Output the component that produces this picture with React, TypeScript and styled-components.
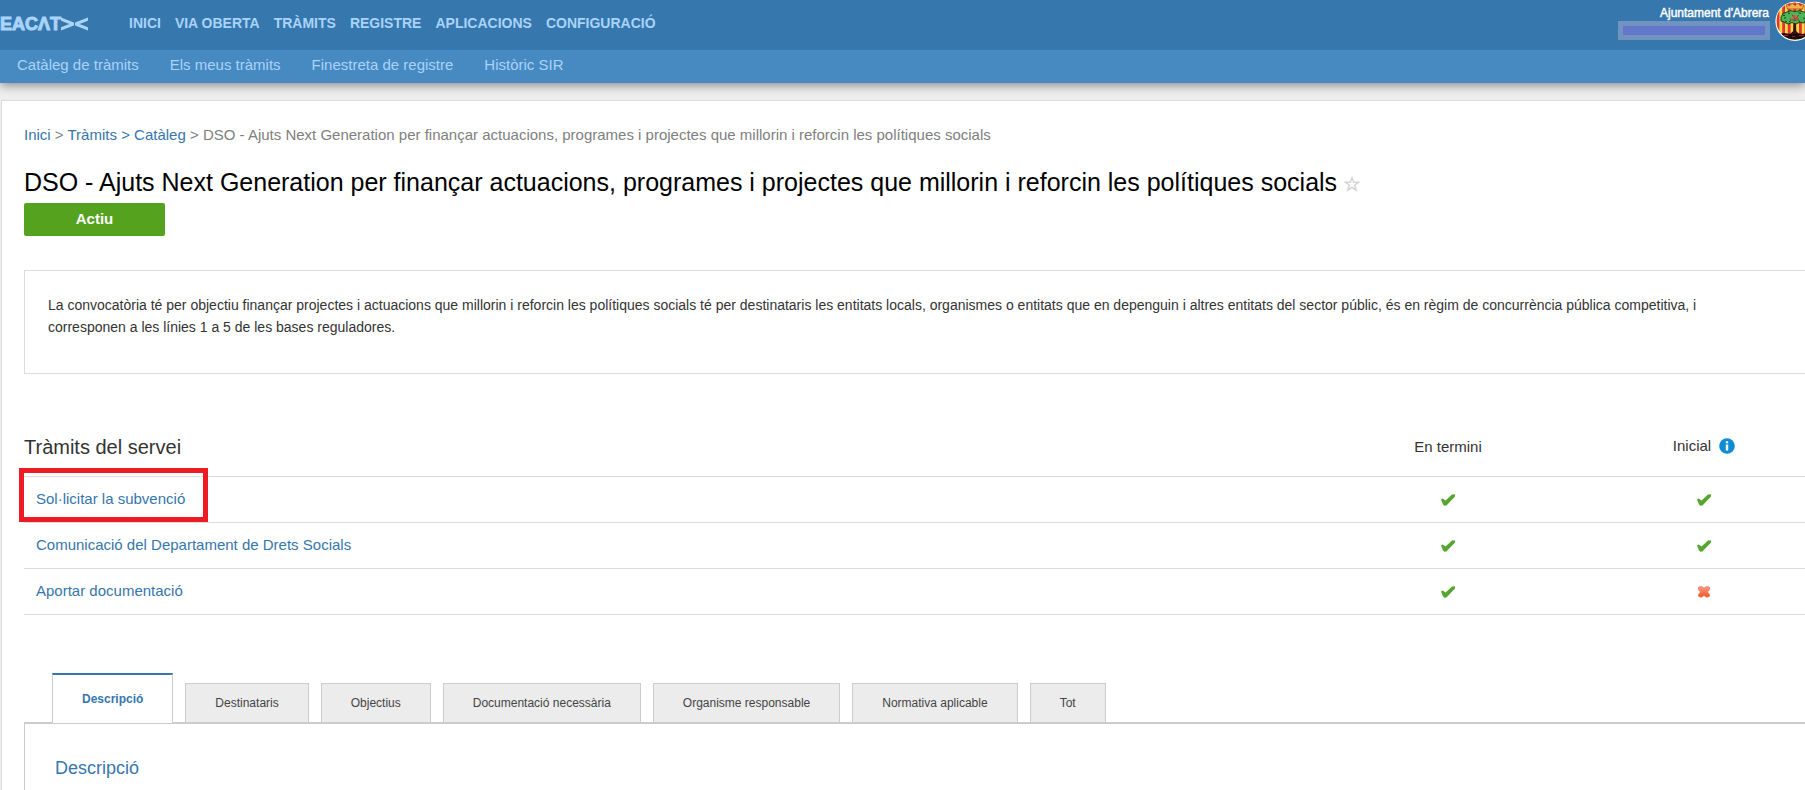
import React from "react";
import styled, { createGlobalStyle } from "styled-components";

const GlobalStyle = createGlobalStyle`
  * { box-sizing: border-box; }
  body {
    margin: 0;
    background: #eeeeee;
    color: #333333;
    font-family: "Liberation Sans", Arial, sans-serif;
    font-size: 15px;
    line-height: 22px;
    overflow-x: hidden;
  }
  h1, h2, h3, p, ul { margin: 0; padding: 0; font-weight: normal; }
  a { text-decoration: none; color: #3676ad; }
`;

const Header = styled.header`
  position: relative;
  box-shadow: 0 2px 10px rgba(0, 0, 0, 0.45);
`;

const TopBar = styled.div`
  display: flex;
  align-items: flex-start;
  height: 50px;
  background: #3677ae;
  overflow: hidden;
`;

const Logo = styled.a`
  display: flex;
  align-items: center;
  width: 113px;
  height: 48px;
  color: #a9d3f9;
  font-size: 18px;
  font-weight: bold;
  line-height: 20px;
  -webkit-text-stroke: 1px #a9d3f9;
`;

const MainNav = styled.nav`
  display: flex;
  flex: 1;
  gap: 14px;
  padding-left: 16px;
`;

const MainLink = styled.a`
  color: #a9d3f9;
  font-size: 14px;
  font-weight: bold;
  line-height: 46px;
`;

const Account = styled.div`
  display: flex;
  flex-direction: column;
  align-items: flex-end;
  padding-top: 6px;
`;

const AccountName = styled.span`
  padding-right: 1px;
  color: #ffffff;
  font-size: 12px;
  line-height: 15px;
  -webkit-text-stroke: 0.4px #ffffff;
`;

const UserMask = styled.div`
  width: 152px;
  height: 19px;
  border: 5px solid #7193c0;
  background: #6277c9;
`;

const CrestSvg = styled.svg`
  flex: none;
  width: 40px;
  height: 40px;
  margin: 1px -10px 0 5px;
`;

const SubNav = styled.nav`
  display: flex;
  gap: 31px;
  height: 33px;
  padding-left: 17px;
  background: #478ac2;
`;

const SubLink = styled.a`
  color: #a9d3f9;
  line-height: 30px;
`;

const Page = styled.main`
  margin: 17px 0 0 1px;
  padding: 23px 0 0 22px;
  border: 1px solid #dbdbe0;
  border-right: 0;
  border-bottom: 0;
  background: #ffffff;
`;

const Breadcrumb = styled.nav`
  color: #808080;
`;

const TitleRow = styled.div`
  display: flex;
  align-items: center;
  gap: 7px;
  padding-top: 20px;
`;

const Title = styled.h1`
  color: #000000;
  font-size: 25px;
  line-height: 32px;
`;

const StarButton = styled.button`
  display: flex;
  padding: 4px 0 0;
  border: 0;
  background: none;
`;

const Status = styled.div`
  width: 141px;
  height: 33px;
  margin-top: 5px;
  border-radius: 2px;
  background: #54a21d;
  color: #ffffff;
  font-weight: bold;
  line-height: 31px;
  text-align: center;
`;

const Summary = styled.section`
  margin-top: 34px;
  padding: 23px 40px 35px 23px;
  border: 1px solid #dcdcdc;
  border-right: 0;
  font-size: 14px;
`;

const ServiceTable = styled.table`
  width: 100%;
  margin-top: 43px;
  border-collapse: collapse;
  table-layout: fixed;
`;

const HeadCell = styled.th<{ $width?: string; $title?: boolean }>`
  width: ${(p) => p.$width || "auto"};
  height: 59px;
  padding: 2px 0 0;
  font-size: ${(p) => (p.$title ? "20px" : "15px")};
  font-weight: normal;
  text-align: ${(p) => (p.$title ? "left" : "center")};
`;

const HeadLabel = styled.span`
  display: inline-flex;
  align-items: center;
  gap: 8px;
  padding-bottom: 2px;
`;

const Cell = styled.td<{ $mark?: boolean }>`
  height: 46px;
  padding: ${(p) => (p.$mark ? "2px 0 0" : "0 12px")};
  border-top: 1px solid #dcdcdc;
  border-bottom: 1px solid #dcdcdc;
  text-align: ${(p) => (p.$mark ? "center" : "left")};
  line-height: ${(p) => (p.$mark ? "0" : "22px")};
`;

const ServiceLink = styled.a`
  position: relative;
`;

const Highlight = styled.span`
  position: absolute;
  top: -22px;
  left: -17px;
  width: 189px;
  height: 54px;
  border: 5px solid #ed1c24;
  pointer-events: none;
`;

const TabList = styled.div`
  display: flex;
  align-items: flex-end;
  gap: 12px;
  margin-top: 58px;
  padding-left: 28px;
`;

const Tab = styled.button<{ $active?: boolean }>`
  position: relative;
  height: ${(p) => (p.$active ? "50px" : "39px")};
  margin-bottom: ${(p) => (p.$active ? "-1px" : "0")};
  padding: 0 29px;
  border: 1px solid #cccccc;
  border-bottom: 0;
  border-top: ${(p) => (p.$active ? "2px solid #3676ad" : "1px solid #cccccc")};
  background: ${(p) => (p.$active ? "#ffffff" : "#ececec")};
  color: ${(p) => (p.$active ? "#3676ad" : "#444444")};
  font-family: inherit;
  font-size: 12px;
  font-weight: ${(p) => (p.$active ? "bold" : "normal")};
`;

const TabPanel = styled.section`
  padding: 32px 30px 10px;
  border-top: 2px solid #cccccc;
  border-left: 1px solid #cccccc;
`;

const PanelTitle = styled.h3`
  color: #3676ad;
  font-size: 18px;
  line-height: 24px;
`;

const Check = () => (
  <svg width="16" height="14" viewBox="0 0 16 14" role="img" aria-label="Sí">
    <path d="M1 6.4 2.6 5.4 5.6 7.6 12 1.6 15 1.2V3.4L6.4 12.4 4.6 12.8 3 11.4Z" fill="#56a52e" />
  </svg>
);

const Cross = () => (
  <svg width="14" height="14" viewBox="0 0 14 14" role="img" aria-label="No">
    <defs>
      <linearGradient id="crossFill" x1="0" y1="0" x2="0" y2="1">
        <stop offset="0" stopColor="#ff9a7c" />
        <stop offset="1" stopColor="#f0582f" />
      </linearGradient>
    </defs>
    <path
      d="M1.5 2.5 2.5 1.8H5L7 3.3 9 1.8H11.5L12.5 2.5V4.6L10.4 7 12.5 9.4V11L11.5 12H9L7 10.4 5 12H2.5L1.5 11V9.4L3.6 7 1.5 4.6Z"
      fill="url(#crossFill)"
      stroke="#e9714f"
      strokeWidth="0.8"
    />
  </svg>
);

const InfoIcon = () => (
  <svg width="16" height="16" viewBox="0 0 16 16" role="img" aria-label="Informació">
    <circle cx="8" cy="8" r="7.8" fill="#108dd2" />
    <path d="M6.8 6.4H9.2V12.6H6.8ZM6.8 3.2H9.2V5.2H6.8Z" fill="#ffffff" />
  </svg>
);

const Crest = () => (
  <CrestSvg viewBox="0 0 40 40" role="img" aria-label="Escut d'Abrera">
    <defs>
      <clipPath id="crestClip"><circle cx="20" cy="20" r="18.6" /></clipPath>
    </defs>
    <circle cx="20" cy="20.4" r="19.6" fill="#ffffff" />
    <g clipPath="url(#crestClip)">
      <rect width="40" height="40" fill="#f8d941" />
      <path d="M3 0V40M8.6 0V40M14.2 0V40M19.8 0V40M25.4 0V40M31 0V40M36.6 0V40" stroke="#e23138" strokeWidth="2.8" />
      <path d="M0 33 9 32 15 33 20 31.5 27 33 34 32 40 33V40H0Z" fill="#1d0b0c" />
      <path d="M18.6 21H20.8L21.2 30 24 33H15L18.2 30Z" fill="#35140f" />
      <path d="M11 2.5 14.5 5 17 2 20 4.5 23 2 25.5 5 29 2.5 27.6 8H12.4Z" fill="#f0b448" stroke="#b8402c" strokeWidth="0.8" />
      <path d="M6 16 8 12.5 12 11 16 9.6 20 10.6 24 9.6 29 11 33 13 34.5 17 32.5 21 28 22 25 21 21 23 17 21.5 13 23 9 21 6 20Z" fill="#4fb457" stroke="#0f3317" strokeWidth="0.9" />
      <path d="M8 14.4H10M13 11.8 15 12.6M23.4 11.8 26 12.4M30 13.6 32 15M10 20 12 20.8M29 20.6 31 19.6M14 21 16 19.6M23 19.6 25 20.4M9 17.2 11 16.6M28 17 30 17.6" stroke="#14471d" strokeWidth="1" />
      <path d="M17 13.6 20 18.4 23.6 14M15 18 20 19.6 24 17.6" fill="none" stroke="#6a2a1c" strokeWidth="0.8" />
      <g fill="#ee3d47">
        <circle cx="19" cy="15.4" r="1.5" />
        <circle cx="22" cy="17.4" r="1.3" />
        <circle cx="17.2" cy="18.6" r="1.2" />
      </g>
      <path d="M8 34.5H13M17 35.5H20M24 34.5H29" stroke="#a02228" strokeWidth="1" />
    </g>
  </CrestSvg>
);

const sections = ["INICI", "VIA OBERTA", "TRÀMITS", "REGISTRE", "APLICACIONS", "CONFIGURACIÓ"];
const subsections = ["Catàleg de tràmits", "Els meus tràmits", "Finestreta de registre", "Històric SIR"];
const services = [
  { name: "Sol·licitar la subvenció", initial: true, highlighted: true },
  { name: "Comunicació del Departament de Drets Socials", initial: true },
  { name: "Aportar documentació", initial: false },
];
const tabs = ["Descripció", "Destinataris", "Objectius", "Documentació necessària", "Organisme responsable", "Normativa aplicable", "Tot"];

const title = "DSO - Ajuts Next Generation per finançar actuacions, programes i projectes que millorin i reforcin les polítiques socials";

export default function App() {
  return (
    <>
      <GlobalStyle />
      <Header>
        <TopBar>
          <Logo href="#">
            EACΛT
            <svg width="27" height="14" viewBox="0 0 27 14" fill="#a9d3f9" stroke="none" aria-hidden="true">
              <path d="M0 0.6 13 5.6V8.4L0 13.4V10.2L8.4 7 0 3.8ZM27 0.6 14 5.6V8.4L27 13.4V10.2L18.6 7 27 3.8Z" />
            </svg>
          </Logo>
          <MainNav>
            {sections.map((s) => <MainLink href="#" key={s}>{s}</MainLink>)}
          </MainNav>
          <Account>
            <AccountName>Ajuntament d'Abrera</AccountName>
            <UserMask />
          </Account>
          <Crest />
        </TopBar>
        <SubNav>
          {subsections.map((s) => <SubLink href="#" key={s}>{s}</SubLink>)}
        </SubNav>
      </Header>
      <Page>
        <Breadcrumb>
          <a href="#">Inici</a> &gt; <a href="#">Tràmits</a> <a href="#">&gt;</a> <a href="#">Catàleg</a> &gt; {title}
        </Breadcrumb>
        <TitleRow>
          <Title>{title}</Title>
          <StarButton aria-label="Preferit">
            <svg width="16" height="16" viewBox="0 0 16 16" fill="none" stroke="#d5d5d5" strokeWidth="1.5">
              <path d="M8 1.8 9.7 6.2H14.6L10.7 9.2 12.2 14.2 8 11.3 3.8 14.2 5.3 9.2 1.4 6.2H6.3Z" />
            </svg>
          </StarButton>
        </TitleRow>
        <Status>Actiu</Status>
        <Summary>
          <p>La convocatòria té per objectiu finançar projectes i actuacions que millorin i reforcin les polítiques socials té per destinataris les entitats locals, organismes o entitats que en depenguin i altres entitats del sector públic, és en règim de concurrència pública competitiva, i corresponen a les línies 1 a 5 de les bases reguladores.</p>
        </Summary>
        <ServiceTable>
          <thead>
            <tr>
              <HeadCell $title>Tràmits del servei</HeadCell>
              <HeadCell $width="310px">En termini</HeadCell>
              <HeadCell $width="202px"><HeadLabel>Inicial <InfoIcon /></HeadLabel></HeadCell>
            </tr>
          </thead>
          <tbody>
            {services.map((s) => (
              <tr key={s.name}>
                <Cell><ServiceLink href="#">{s.name}{s.highlighted && <Highlight />}</ServiceLink></Cell>
                <Cell $mark><Check /></Cell>
                <Cell $mark>{s.initial ? <Check /> : <Cross />}</Cell>
              </tr>
            ))}
          </tbody>
        </ServiceTable>
        <TabList role="tablist">
          {tabs.map((t, i) => <Tab role="tab" aria-selected={i === 0} $active={i === 0} key={t}>{t}</Tab>)}
        </TabList>
        <TabPanel role="tabpanel">
          <PanelTitle>Descripció</PanelTitle>
        </TabPanel>
      </Page>
    </>
  );
}
